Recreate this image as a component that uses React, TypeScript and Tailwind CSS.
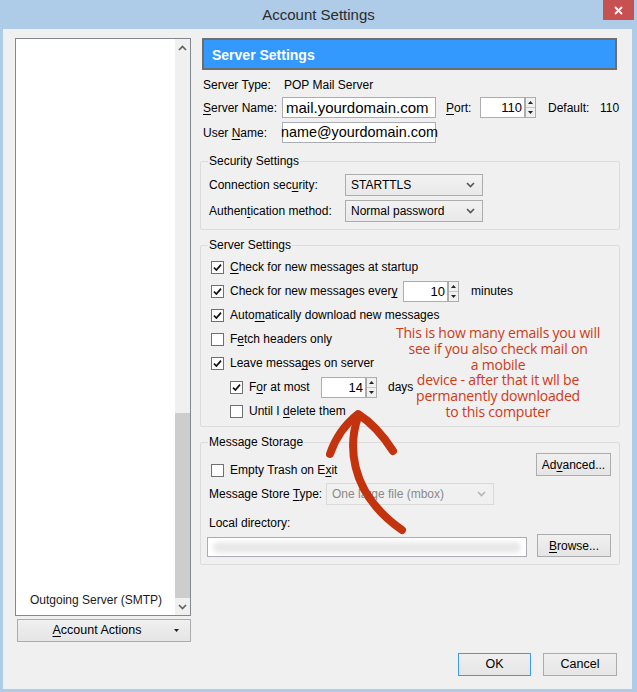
import type { ReactNode } from 'react';

const FONT = "font-['Liberation_Sans',Arial,sans-serif]";

function U({ children }: { children: ReactNode }) {
  return <span className="underline underline-offset-[2px]">{children}</span>;
}

function Check({ on }: { on?: boolean }) {
  return (
    <span className="w-[13px] h-[13px] shrink-0 border border-[#707070] bg-white flex items-center justify-center">
      {on && (
        <svg width="9" height="9" viewBox="0 0 9 9">
          <path d="M1 4.6 L3.4 7 L8 1.6" fill="none" stroke="#111" strokeWidth="1.7" />
        </svg>
      )}
    </span>
  );
}

function Spin() {
  return (
    <div className="w-[11px] h-[21px] flex flex-col border border-[#acacac] bg-[#f0f0f0]">
      <div className="flex-1 flex items-center justify-center border-b border-[#c8c8c8]">
        <svg width="5" height="3" viewBox="0 0 5 3"><path d="M0 3 L2.5 0 L5 3Z" fill="#222" /></svg>
      </div>
      <div className="flex-1 flex items-center justify-center">
        <svg width="5" height="3" viewBox="0 0 5 3"><path d="M0 0 L2.5 3 L5 0Z" fill="#222" /></svg>
      </div>
    </div>
  );
}

function NumBox({ value }: { value: string }) {
  return (
    <div className="flex">
      <div className="w-[45px] h-[21px] border border-[#abadb3] bg-white text-right pr-[2px] leading-[19px] text-[13px]">{value}</div>
      <Spin />
    </div>
  );
}

function Chevron({ color = '#555' }: { color?: string }) {
  return (
    <svg width="9" height="6" viewBox="0 0 9 6">
      <path d="M1 1 L4.5 4.5 L8 1" fill="none" stroke={color} strokeWidth="1.6" />
    </svg>
  );
}

function Select({ text, w, disabled }: { text: string; w: string; disabled?: boolean }) {
  return (
    <div
      className={`${w} h-[22px] flex items-center justify-between pl-[5px] pr-[7px] border ${
        disabled ? 'border-[#d9d9d9] bg-[#f0f0f0] text-[#8a8a8a]' : 'border-[#acacac] bg-gradient-to-b from-[#f2f2f2] to-[#e9e9e9]'
      }`}
    >
      <span>{text}</span>
      <Chevron color={disabled ? '#b5b5b5' : '#555'} />
    </div>
  );
}

function Btn({ children, w, focus, className = '' }: { children: ReactNode; w: string; focus?: boolean; className?: string }) {
  return (
    <div
      className={`${w} h-[23px] flex items-center justify-center border bg-gradient-to-b from-[#f0f0f0] to-[#e5e5e5] ${
        focus ? 'border-[#3c9bf0]' : 'border-[#acacac]'
      } ${className}`}
    >
      {children}
    </div>
  );
}

function Group({ title, children, className = '' }: { title: string; children: ReactNode; className?: string }) {
  return (
    <fieldset className={`border border-[#dcdcdc] rounded-[2px] px-[8px] ${className}`}>
      <legend className="ml-[-1px] px-[1px] leading-[14px]">{title}</legend>
      {children}
    </fieldset>
  );
}

function CheckRow({ on, children, indent }: { on?: boolean; children: ReactNode; indent?: boolean }) {
  return (
    <div className={`h-[24px] flex items-center ${indent ? 'pl-[21px]' : 'pl-[2px]'}`}>
      <Check on={on} />
      <div className="ml-[6px] flex items-center">{children}</div>
    </div>
  );
}

export default function App() {
  return (
    <div className={`relative w-[637px] h-[692px] bg-[#aecbe8] flex flex-col text-[12px] text-black ${FONT}`}>
      {/* title bar */}
      <div className="relative h-[29px] shrink-0 flex items-center justify-center">
        <span className="text-[15px] text-[#2b2b2b] mt-[1px]">Account Settings</span>
        <div className="absolute top-0 right-[3px] w-[31px] h-[20px] bg-[#c75050] flex items-center justify-center">
          <svg width="9" height="9" viewBox="0 0 9 9">
            <path d="M1 1 L8 8 M8 1 L1 8" stroke="white" strokeWidth="1.8" />
          </svg>
        </div>
      </div>

      {/* client */}
      <div className="flex-1 ml-[3px] mr-[5px] mb-[3px] bg-[#f0f0f0] pl-[12px] pt-[9px] pr-[12px] flex flex-col">
        <div className="flex h-[604px]">
          {/* account list */}
          <div className="w-[176px] flex flex-col">
            <div className="h-[578px] border border-[#828790] bg-white flex">
              <div className="flex-1 flex flex-col justify-end">
                <div className="h-[24px] flex items-center pl-[14px] mb-[3px] text-[#1a1a1a]">Outgoing Server (SMTP)</div>
              </div>
              <div className="w-[15px] bg-[#f0f0f0] flex flex-col">
                <div className="h-[17px] flex items-center justify-center">
                  <svg width="9" height="6" viewBox="0 0 9 6"><path d="M1 5 L4.5 1.5 L8 5" fill="none" stroke="#606060" strokeWidth="1.6" /></svg>
                </div>
                <div className="flex-1 flex flex-col justify-end">
                  <div className="h-[185px] bg-[#cdcdcd]" />
                </div>
                <div className="h-[17px] flex items-center justify-center">
                  <Chevron color="#606060" />
                </div>
              </div>
            </div>
            <div className="mt-[3px] ml-[2px] relative">
              <Btn w="w-[174px]" className="pr-[14px]">
                <span className="text-[12.5px]"><U>A</U>ccount Actions</span>
              </Btn>
              <svg className="absolute right-[12px] top-[10px]" width="5" height="3" viewBox="0 0 5 3"><path d="M0 0 L2.5 3 L5 0Z" fill="#222" /></svg>
            </div>
          </div>

          {/* right panel */}
          <div className="ml-[9px] w-[420px] flex flex-col">
            <div className="ml-[2px] mr-[3px] h-[32px] bg-[#3399ff] border-2 border-[#6d6d6d] flex items-center pl-[8px] pt-[2px]">
              <span className="text-white font-bold text-[14px]">Server Settings</span>
            </div>

            <div className="mt-[8px] pl-[3px] h-[14px] flex items-center">
              <span className="w-[81px]">Server Type:</span>
              <span>POP Mail Server</span>
            </div>
            <div className="mt-[5px] pl-[3px] h-[21px] flex items-center">
              <span className="w-[79px]"><U>S</U>erver Name:</span>
              <div className="w-[154px] h-[21px] border border-[#abadb3] bg-white pl-[3px] text-[15px] leading-[19px]">mail.yourdomain.com</div>
              <span className="ml-[10px] w-[34px]"><U>P</U>ort:</span>
              <div className="flex">
                <div className="w-[45px] h-[21px] border border-[#abadb3] bg-white text-right pr-[2px] leading-[19px] text-[13px]">110</div>
                <Spin />
              </div>
              <span className="ml-[12px] w-[52px]">Default:</span>
              <span>110</span>
            </div>
            <div className="mt-[4px] pl-[3px] h-[21px] flex items-center">
              <span className="w-[79px]">User <U>N</U>ame:</span>
              <div className="w-[154px] h-[21px] border border-[#abadb3] bg-white text-[14.4px] leading-[19px] whitespace-nowrap">
                <span className="ml-[-2px]">name@yourdomain.com</span>
              </div>
            </div>

            <Group title="Security Settings" className="mt-[11px] pb-[7px]">
              <div className="pt-[6px] flex flex-col gap-[4px]">
                <div className="flex items-center">
                  <span className="w-[136px]">Connection sec<U>u</U>rity:</span>
                  <Select w="w-[138px]" text="STARTTLS" />
                </div>
                <div className="flex items-center">
                  <span className="w-[136px]">Authen<U>t</U>ication method:</span>
                  <Select w="w-[138px]" text="Normal password" />
                </div>
              </div>
            </Group>

            <Group title="Server Settings" className="mt-[8px] pb-[3px]">
              <div className="pt-[3px]">
                <CheckRow on>
                  <span><U>C</U>heck for new messages at startup</span>
                </CheckRow>
                <CheckRow on>
                  <span className="w-[173px]">Check for new messages ever<U>y</U></span>
                  <NumBox value="10" />
                  <span className="ml-[12px]">minutes</span>
                </CheckRow>
                <CheckRow on>
                  <span>Auto<U>m</U>atically download new messages</span>
                </CheckRow>
                <CheckRow>
                  <span>F<U>e</U>tch headers only</span>
                </CheckRow>
                <CheckRow on>
                  <span>Leave messa<U>g</U>es on server</span>
                </CheckRow>
                <CheckRow on indent>
                  <span className="w-[72px]">F<U>o</U>r at most</span>
                  <NumBox value="14" />
                  <span className="ml-[11px]">days</span>
                </CheckRow>
                <CheckRow indent>
                  <span>Until I <U>d</U>elete them</span>
                </CheckRow>
              </div>
            </Group>

            <Group title="Message Storage" className="mt-[8px] pb-[7px]">
              <div className="pt-[4px] flex justify-between items-start">
                <div className="mt-[10px] h-[14px] flex items-center pl-[2px]">
                  <Check />
                  <span className="ml-[6px]">Empty Trash on E<U>x</U>it</span>
                </div>
                <Btn w="w-[75px]">
                  <span>Ad<U>v</U>anced...</span>
                </Btn>
              </div>
              <div className="mt-[6px] flex items-center">
                <span className="w-[117px]">Message Store <U>T</U>ype:</span>
                <Select w="w-[168px]" text="One large file (mbox)" disabled />
              </div>
              <div className="mt-[11px] h-[14px] flex items-center">Local directory:</div>
              <div className="mt-[4px] flex items-end justify-between">
                <div className="ml-[-2px] w-[320px] h-[20px] border border-[#abadb3] bg-white flex items-center px-[5px] overflow-hidden">
                  <div className="w-full h-[11px] rounded-full bg-[#e9e9e9] blur-[2px]" />
                </div>
                <Btn w="w-[74px]">
                  <span><U>B</U>rowse...</span>
                </Btn>
              </div>
            </Group>
          </div>
        </div>

        <div className="mt-[11px] flex justify-end gap-[12px] mr-[3px]">
          <Btn w="w-[73px]" focus>
            <span className="text-[12.5px]">OK</span>
          </Btn>
          <Btn w="w-[74px]">
            <span className="text-[12.5px]">Cancel</span>
          </Btn>
        </div>
      </div>

      {/* annotation overlay */}
      <div className="absolute left-[390px] top-[325px] w-[216px] text-center text-[14px] leading-[15.8px] text-[#cf3a17] font-['Open_Sans',sans-serif] tracking-[-0.2px] pointer-events-none">
        This is how many emails you will
        <br />
        see if you also check mail on
        <br />
        a mobile
        <br />
        device - after that it wll be
        <br />
        permanently downloaded
        <br />
        to this computer
      </div>
      <svg className="absolute left-0 top-0 pointer-events-none" width="637" height="692" viewBox="0 0 637 692">
        <path d="M358 417 C350 440, 345 490, 402 530" fill="none" stroke="#c2330e" strokeWidth="8" strokeLinecap="round" />
        <path d="M330 454 Q338 430 358 414 Q377 426 393 451" fill="none" stroke="#c2330e" strokeWidth="8" strokeLinecap="round" strokeLinejoin="round" />
      </svg>
    </div>
  );
}
